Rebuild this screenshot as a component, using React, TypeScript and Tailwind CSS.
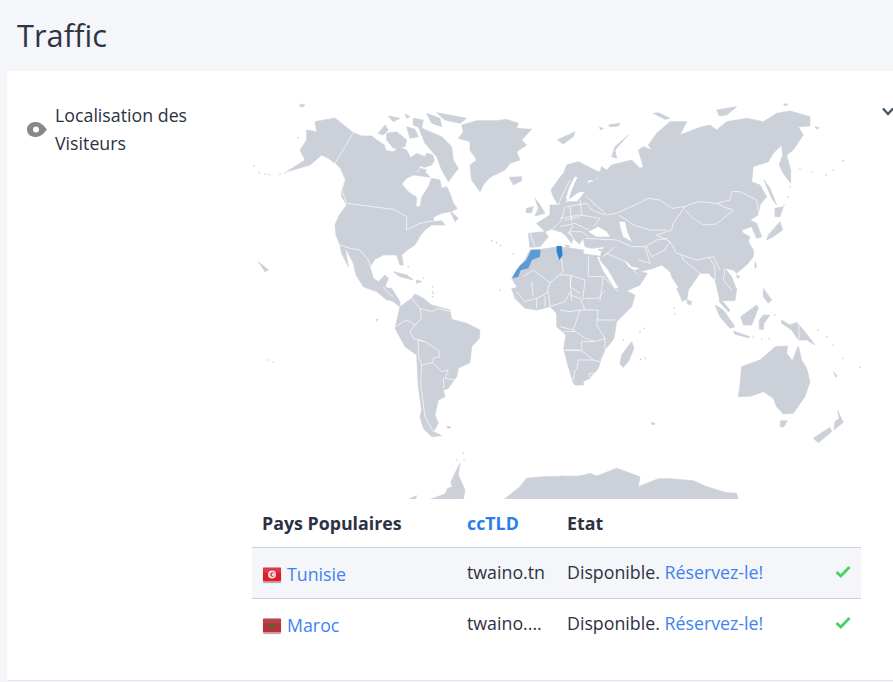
const LAND = '#ccd0d9'

type Tile = { x: number; y: number; land: string[]; holes?: string[]; lines?: string[]; dots?: number[][] }

// each tile is traced at 3x, so the points stay easy to compare with the screenshot
const tiles: Tile[] = [
  {
    x: 250,
    y: 90,
    land: [
      '195,95 255,84 310,128 335,138 365,138 380,150 403,165 408,182 432,185 445,170 470,180 482,203 500,190 525,200 530,190 548,195 553,212 545,225 525,232 510,228 500,248 530,250 540,262 515,258 490,255 470,265 455,282 475,305 500,322 498,350 510,350 515,322 535,290 545,265 570,270 575,295 590,290 600,310 610,340 622,356 600,365 575,370 550,382 552,395 575,392 585,405 545,405 525,420 510,438 495,465 475,478 455,495 460,525 450,525 440,495 400,495 375,508 360,530 370,565 385,575 405,555 415,565 405,590 425,600 440,632 410,630 380,605 340,590 318,555 310,520 285,470 295,530 275,490 270,465 258,435 255,405 268,375 290,345 275,320 275,300 285,270 270,235 255,220 235,205 215,195 180,225 110,245 165,210 150,180 170,150 170,120 200,125',
      '385,130 405,105 415,120 400,135',
      '410,130 440,125 470,150 465,170 430,175 410,150',
      '415,78 450,85 430,95',
      '465,72 480,80 470,85',
      '490,85 520,90 515,115 490,105',
      '530,70 570,85 575,110 545,100',
      '560,68 650,85 630,100 585,90',
      '470,110 495,118 505,140 480,145',
      '505,110 540,125 575,140 605,170 610,210 625,235 595,275 575,240 560,200 525,160',
      '510,235 530,240 525,250 505,248',
      '635,105 680,92 740,92 770,88 805,100 800,115 845,118 815,150 830,165 800,185 810,210 780,220 765,240 720,262 700,285 690,305 665,270 660,225 680,210 660,180 660,155 625,145 640,125',
      '778,262 815,260 815,272 790,285',
      '922,150 975,125 970,140 940,162',
      '600,362 625,385 615,395',
      '855,325 870,345 885,370 855,378 865,355',
      '830,355 850,350 845,368 828,368',
      '903,300 935,255 975,225 995,220 995,300 960,325 925,345 910,320',
      '860,400 900,375 940,345 1000,340 1000,440 955,425 930,425 905,418 885,425',
      '835,430 885,425 895,440 870,470 840,472',
      '430,545 470,555 490,570 450,560',
      '500,570 515,575 500,580',
      '785,565 795,550 810,530 825,510 840,480 870,478 930,470 1000,480 1000,632 820,632 800,620 790,600 800,590',
      '150,42 165,45 160,50 150,50',
      '25,515 55,540 45,545',
    ],
    lines: [
      '310,128 255,220 270,235 285,270 275,300 290,340 430,358 470,380 470,420 510,400 550,392',
      '270,465 300,475 330,480 355,510 362,530',
      '820,560 850,540 900,578 940,545 935,510 925,505',
      '845,575 850,620',
      '900,578 890,610 860,625',
      '965,555 960,590 990,610',
      '840,430 855,470',
      '905,420 935,390 945,350',
      '945,390 990,380',
      '960,270 940,310 925,345',
      '400,590 415,610 430,620',
    ],
    dots: [[12, 228], [28, 248], [45, 252], [58, 254], [90, 252], [105, 248], [145, 143], [725, 452], [740, 458], [752, 466], [790, 492], [750, 600], [475, 530], [520, 565], [548, 590], [550, 610]],
  },
  {
    x: 560,
    y: 90,
    land: [
      '50,335 60,325 75,305 50,305 85,280 115,265 85,240 120,245 125,230 140,240 155,225 215,210 240,235 250,230 235,180 250,170 275,180 265,165 290,130 330,95 380,95 360,135 420,112 450,105 470,120 500,95 560,85 610,95 650,70 690,63 750,80 750,108 715,110 730,135 700,180 680,195 692,240 692,280 670,250 658,225 668,195 665,165 640,190 625,215 580,230 575,275 600,285 620,320 600,345 595,375 570,390 590,400 605,440 590,445 575,410 545,420 550,430 570,440 565,455 580,480 580,500 560,525 530,550 520,540 495,535 515,560 530,600 525,632 480,632 465,570 445,550 420,550 385,600 380,632 335,560 330,545 305,525 280,535 240,545 262,550 240,585 185,610 145,540 120,510 125,480 135,470 95,475 75,470 70,445 58,462 45,450 30,425 15,405 -30,395 -30,345 0,345 25,335',
      '0,280 20,225 55,215 85,230 120,248 105,270 85,270 75,300 50,300 40,300 45,270 30,285 25,320 10,345 0,340',
      '-20,395 10,410 38,445 35,460 20,440 0,422 -20,412',
      '15,465 30,468 22,475',
      '0,500 -10,480 130,500 110,500 130,545 170,605 190,632 -10,632',
      '205,135 165,170 155,200 170,205 165,180',
      '280,70 295,68 310,75 330,85 315,88 295,78',
      '470,60 530,50 500,75 478,78',
      '670,42 685,42 675,48',
      '612,270 630,295 650,345 635,325',
      '645,355 670,350 660,380 645,380',
      '660,395 668,420 640,440 620,450 625,435',
      '585,515 590,530 585,535',
      '530,555 540,560 532,565',
      '765,110 778,113 770,118',
      '118,112 130,115 122,120',
      '145,105 180,100 175,108 150,110',
      '115,478 125,478 120,484',
    ],
    holes: [
      '85,425 115,410 140,425 150,440 110,440',
      '178,395 195,395 200,420 215,455 190,440 182,415',
      '195,510 215,530 240,535 225,540 205,530',
      '25,332 35,300 52,262 44,260 28,292 18,325',
    ],
    lines: [
      '80,320 140,375 170,370 235,340 265,325 300,330 335,355 375,350 385,345 415,335 470,340 510,330 515,305 540,305 590,330 597,375 580,390',
      '375,360 400,385 430,405 470,402 520,360 495,352 470,340',
      '375,350 340,400 335,420 290,435 330,455 350,490 410,510 460,500 480,540',
      '175,375 200,390 220,405 270,420 320,420',
      '170,450 215,470 255,470 270,520 235,510',
      '255,470 290,450 325,445',
      '260,470 275,500 315,480 330,455',
      '140,490 195,515 235,555',
      '165,470 130,500 140,490',
      '365,495 370,510 420,550',
      '445,500 465,530 465,570',
      '495,535 490,570 515,600',
      '20,350 80,340 95,360 135,375',
      '0,385 60,375 120,385 100,410',
      '0,410 45,400 85,420',
      '30,350 35,395',
      '60,330 65,375',
      '30,425 65,425 85,440',
      '75,445 170,450',
      '85,500 85,560 130,560',
      '30,555 75,570 68,632',
      '0,555 30,555 35,632',
      '130,560 175,605',
      '130,560 120,632',
      '25,430 40,405',
    ],
    dots: [[720, 235], [755, 247], [798, 255], [820, 240], [850, 212], [690, 290], [685, 320], [672, 345]],
  },
  {
    x: 250,
    y: 290,
    land: [
      '495,12 520,25 545,45 600,60 605,88 650,100 690,120 688,145 665,170 660,218 625,235 620,260 595,295 580,300 585,320 565,330 555,375 565,400 550,425 575,437 545,440 520,415 510,380 515,360 505,290 500,195 465,170 435,115 450,50 485,25',
      '395,-5 425,-5 450,35 450,50 430,35 410,25',
      '785,-5 795,25 825,55 860,60 900,50 920,70 935,100 950,125 942,175 955,230 975,285 1000,285 1000,-5',
      '760,630 810,590 830,565 880,560 1000,558 1000,630',
      '535,630 585,612 610,560 630,520 625,555 645,600 640,630',
      '470,630 500,617 495,630',
      '590,410 600,410 595,416',
      '378,88 384,88 380,94',
    ],
    holes: ['575,600 600,565 605,590'],
    lines: [
      '485,25 510,55 515,85 495,105 480,125 490,145 525,155 565,180 570,200 550,205 548,218 575,245 595,240 585,265 615,270',
      '510,55 545,65 565,55 600,65',
      '435,110 470,90 495,105',
      '525,155 505,150 505,200 515,225 548,218',
      '515,225 512,280 525,380 550,425',
      '580,265 582,295',
      '800,5 825,35 860,25 860,55',
      '885,20 885,50',
      '895,5 900,50 945,35 960,5',
      '940,125 975,125',
      '945,180 990,180',
    ],
    dots: [[57, 210], [70, 216], [600, 412], [640, 490], [620, 510], [642, 510], [548, 5], [548, 20]],
  },
  {
    x: 560,
    y: 290,
    land: [
      '-10,-5 180,-5 225,15 215,50 170,95 162,145 135,180 122,210 115,235 90,265 50,285 40,280 25,225 12,180 18,135 -10,110',
      '215,155 222,175 205,215 190,232 180,222 185,195 200,175',
      '350,-5 385,-5 378,25 368,35',
      '383,30 395,35 392,45 382,42',
      '465,45 490,60 525,110 510,115 480,80',
      '520,123 570,140 565,143 525,133',
      '542,80 590,45 595,55 575,105 550,105',
      '598,90 610,75 630,75 612,100 610,118 598,118',
      '610,-5 635,30 625,40 610,20',
      '480,-5 480,25 510,60 505,65 478,35',
      '495,-5 530,-5 520,25 510,10',
      '665,90 690,105 710,97 735,125 765,165 740,150 715,150 695,120 665,100',
      '545,230 600,210 635,180 645,170 683,168 680,190 697,212 715,168 725,210 740,235 750,275 735,320 700,370 670,372 650,350 640,325 610,305 575,318 535,320 540,285',
      '662,392 682,392 672,410 660,410',
      '833,362 850,397 822,420 825,395 838,385',
      '760,445 810,412 815,425 775,458',
      '0,558 50,562 90,550 110,558 170,535 240,560 235,590 295,566 330,566 400,572 440,590 500,608 530,610 535,630 0,630',
      '274,396 286,402 276,404',
      '820,245 832,258 828,262',
    ],
    lines: [
      '0,110 40,120 75,145 105,155 135,145',
      '30,65 60,60 115,60 110,105 135,145 135,180',
      '60,60 40,120',
      '110,90 165,90',
      '12,180 65,182 100,210 120,215',
      '65,182 65,155 100,155',
      '50,240 55,210 100,210',
      '90,250 105,250 100,255 90,262 86,252 90,250',
      '30,15 60,25 75,60',
      '75,25 115,25 135,0',
      '0,60 30,65',
      '45,240 40,270',
      '717,105 717,150',
    ],
    dots: [[190, 150], [240, 125], [252, 115], [242, 208], [256, 205], [342, 55], [345, 72], [580, 142], [605, 148], [628, 146], [775, 120], [800, 140], [820, 165], [848, 205], [900, 232], [645, 75]],
  },
]

function WorldMap() {
  return (
    <svg viewBox="252 100 609 399" className="block h-[399px] w-[609px]">
      {tiles.map((t) => (
        <g key={t.x + '-' + t.y} transform={`translate(${t.x} ${t.y}) scale(0.3333)`}>
          {t.land.map((p, i) => (
            <polygon key={i} points={p} fill={LAND} stroke={LAND} strokeWidth="2" strokeLinejoin="round" />
          ))}
          {t.dots?.map(([cx, cy], i) => (
            <circle key={i} cx={cx} cy={cy} r="2.5" fill={LAND} />
          ))}
        </g>
      ))}
      {tiles.map((t) => (
        <g key={t.x + '-' + t.y} transform={`translate(${t.x} ${t.y}) scale(0.3333)`}>
          {t.holes?.map((p, i) => (
            <polygon key={i} points={p} fill="#ffffff" />
          ))}
          {t.lines?.map((p, i) => (
            <polyline key={i} points={p} fill="none" stroke="#ffffff" strokeWidth="2" strokeLinejoin="round" />
          ))}
        </g>
      ))}
      <g transform="translate(250 90) scale(0.3333)">
        <polygon points="786,565 805,561 812,541 835,535 846,510 870,500 872,479 844,479 829,510 811,525 799,541" fill="#5b9bd5" />
        <polygon points="920,468 935,468 938,495 928,511 920,485" fill="#2b82cf" />
      </g>
    </svg>
  )
}

function FlagTn() {
  return (
    <svg viewBox="0 0 18 14" className="h-[15px] w-[18px] rounded-[1px] shadow-[0_1px_1px_rgba(0,0,0,0.35)]">
      <rect width="18" height="14" fill="#d81e2f" />
      <rect width="18" height="5" fill="#ffffff" opacity="0.12" />
      <circle cx="9" cy="7" r="4" fill="#f7dfe0" />
      <circle cx="9.5" cy="7" r="2.2" fill="#d81e2f" />
      <circle cx="10.2" cy="7" r="1.6" fill="#f7dfe0" />
    </svg>
  )
}

function FlagMa() {
  return (
    <svg viewBox="0 0 18 14" className="h-[15px] w-[18px] rounded-[1px] shadow-[0_1px_1px_rgba(0,0,0,0.35)]">
      <rect width="18" height="14" fill="#b8323a" />
      <rect width="18" height="5" fill="#ffffff" opacity="0.08" />
      <polygon points="9,3 10.1,6 13,6 10.7,7.9 11.6,11 9,9.1 6.4,11 7.3,7.9 5,6 7.9,6" fill="#48683c" />
    </svg>
  )
}

function Tick() {
  return (
    <svg viewBox="0 0 16 13" className="mb-[2px] h-[13px] w-4">
      <path d="M1.5 7 L5.8 11 L14.5 2" fill="none" stroke="#47d264" strokeWidth="2.8" />
    </svg>
  )
}

const rows = [
  { name: 'Tunisie', flag: <FlagTn />, domain: 'twaino.tn', shade: true },
  { name: 'Maroc', flag: <FlagMa />, domain: 'twaino....', shade: false },
]

export default function App() {
  return (
    <div className="h-[682px] w-[893px] overflow-hidden bg-[#f5f6fa] font-['Open_Sans','Noto_Sans',sans-serif] text-[#2d3142]">
      <h1 className="h-[71px] pl-[17px] pt-[13px] text-[30.8px] leading-[44px] text-[#2f3545]">Traffic</h1>
      <div className="ml-[7px] flex h-[610px] w-[900px] rounded-t-[4px] border-b border-[#e6e7eb] bg-white pt-[29px]">
        <div className="flex h-fit w-[245px] items-center pl-5 pt-px">
          <svg viewBox="0 0 20 15" className="h-[15px] w-5 shrink-0">
            <path d="M0 7.5 C0 2.5 4 0 9 0 C14 0 17 4 20 7.5 C17 11 14 15 9 15 C4 15 0 12.5 0 7.5 Z" fill="#888888" />
            <circle cx="9" cy="7.5" r="3" fill="#ffffff" />
          </svg>
          <div className="ml-2 text-[17.8px] leading-[28px]">
            Localisation des
            <br />
            Visiteurs
          </div>
        </div>
        <div className="w-[609px] shrink-0">
          <WorldMap />
          <div className="flex h-[49px] items-center border-b border-[#cbcedb] text-[17.8px] font-bold">
            <div className="w-[205px] pl-[10px]">Pays Populaires</div>
            <div className="w-[100px] pl-[10px] text-[#2b7de9]">ccTLD</div>
            <div className="pl-[10px]">Etat</div>
          </div>
          {rows.map((r) => (
            <div
              key={r.name}
              className={`flex h-[51px] items-start pt-[11px] text-[17.8px] ${r.shade ? 'border-b border-[#cbcedb] bg-[#f5f6fa]' : ''}`}
            >
              <div className="flex w-[205px] items-center gap-[6px] pl-[11px] pt-[2px]">
                {r.flag}
                <a className="text-[#3f83ee]">{r.name}</a>
              </div>
              <div className="w-[100px] px-[10px]">{r.domain}</div>
              <div className="flex w-[304px] items-center justify-between pl-[10px] pr-[10px]">
                <span>
                  Disponible. <a className="text-[#3f83ee]">Réservez-le!</a>
                </span>
                <Tick />
              </div>
            </div>
          ))}
        </div>
        <svg viewBox="0 0 12 10" className="ml-[21px] mt-[7px] h-[10px] w-3 shrink-0">
          <path d="M1 1.5 L6 7 L11 1.5" fill="none" stroke="#4b5563" strokeWidth="2.4" />
        </svg>
      </div>
    </div>
  )
}
